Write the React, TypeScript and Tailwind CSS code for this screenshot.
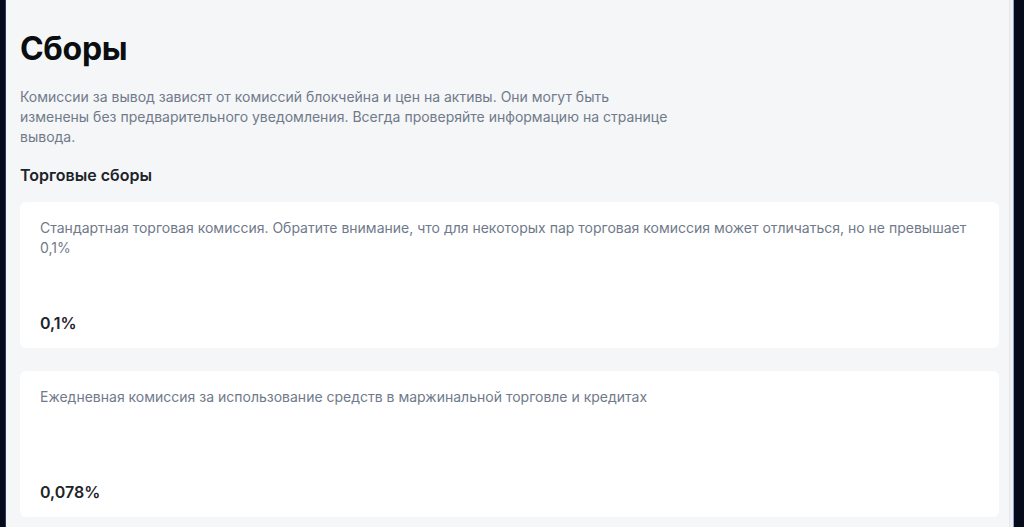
const fees = [
  {
    id: 'trade',
    text: 'Стандартная торговая комиссия. Обратите внимание, что для некоторых пар торговая комиссия может отличаться, но не превышает 0,1%',
    value: '0,1%',
  },
  {
    id: 'margin',
    text: 'Ежедневная комиссия за использование средств в маржинальной торговле и кредитах',
    value: '0,078%',
  },
];

export default function App() {
  return (
    <div
      className="h-screen w-full overflow-hidden bg-[#050b1a] flex"
      style={{ fontFamily: 'Inter, "Noto Sans", sans-serif' }}
    >
      <div className="w-[5px] shrink-0" />
      <div className="w-px shrink-0 bg-[#2a3a66]" />

      <main className="flex-1 h-full bg-[#f5f6f8] pl-[14px] pr-[10px] pt-[29px] overflow-hidden">
        <h1 className="text-[32px] leading-10 font-bold text-[#0b0e11] tracking-[-0.3px]">Сборы</h1>

        <p className="mt-[18px] max-w-[652px] text-sm leading-5 text-[#707a8a]">
          Комиссии за вывод зависят от комиссий блокчейна и цен на активы. Они могут быть
          изменены без предварительного уведомления. Всегда проверяйте информацию на странице
          вывода.
        </p>

        <h2 className="mt-4 text-base leading-6 font-semibold text-[#1e2329]">Торговые сборы</h2>

        <div className="mt-[15px] flex flex-col gap-[23px]">
          {fees.map((fee) => (
            <div
              key={fee.id}
              className="h-[146px] bg-white rounded-md px-5 pt-4 pb-4 flex flex-col justify-between"
            >
              <p className="text-sm leading-5 text-[#707a8a]">{fee.text}</p>
              <p className="text-base leading-[18px] font-semibold text-[#1e2329]">{fee.value}</p>
            </div>
          ))}
        </div>
      </main>

      <div className="w-[4px] shrink-0 bg-[#f0f1f3] border-l border-[#e6e8eb]" />
      <div className="w-px shrink-0 bg-[#8fa3d6]" />
      <div className="w-[10px] shrink-0" />
    </div>
  );
}
